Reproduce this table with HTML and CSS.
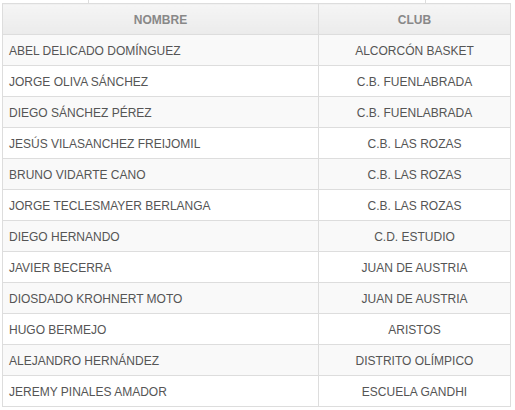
FILE: index.html
```html
<!DOCTYPE html>
<html lang="es">
<head>
<meta charset="utf-8">
<link rel="stylesheet" href="styles.css">
</head>
<body>
<div class="page">
  <div class="tab-stub"></div>
  <table class="roster">
    <thead>
      <tr><th class="col-name">NOMBRE</th><th class="col-club">CLUB</th></tr>
    </thead>
    <tbody>
      <tr><td>ABEL DELICADO DOMÍNGUEZ</td><td class="club">ALCORCÓN BASKET</td></tr>
      <tr><td>JORGE OLIVA SÁNCHEZ</td><td class="club">C.B. FUENLABRADA</td></tr>
      <tr><td>DIEGO SÁNCHEZ PÉREZ</td><td class="club">C.B. FUENLABRADA</td></tr>
      <tr><td>JESÚS VILASANCHEZ FREIJOMIL</td><td class="club">C.B. LAS ROZAS</td></tr>
      <tr><td>BRUNO VIDARTE CANO</td><td class="club">C.B. LAS ROZAS</td></tr>
      <tr><td>JORGE TECLESMAYER BERLANGA</td><td class="club">C.B. LAS ROZAS</td></tr>
      <tr><td>DIEGO HERNANDO</td><td class="club">C.D. ESTUDIO</td></tr>
      <tr><td>JAVIER BECERRA</td><td class="club">JUAN DE AUSTRIA</td></tr>
      <tr><td>DIOSDADO KROHNERT MOTO</td><td class="club">JUAN DE AUSTRIA</td></tr>
      <tr><td>HUGO BERMEJO</td><td class="club">ARISTOS</td></tr>
      <tr><td>ALEJANDRO HERNÁNDEZ</td><td class="club">DISTRITO OLÍMPICO</td></tr>
      <tr><td>JEREMY PINALES AMADOR</td><td class="club">ESCUELA GANDHI</td></tr>
    </tbody>
  </table>
</div>
</body>
</html>
```

FILE: styles.css
```css
html, body {
  margin: 0;
  padding: 0;
  background: #fff;
}
.page {
  padding: 0 4px 0 2px;
  font-family: "Liberation Sans", Arial, sans-serif;
  font-size: 12px;
  color: #555;
}
.tab-stub {
  margin-left: 86px;
  width: 336px;
  height: 3px;
  border-left: 1px solid #ddd;
  border-right: 1px solid #ddd;
}
.roster {
  width: 509px;
  border-collapse: collapse;
  border: 1px solid #ddd;
}
.roster th {
  box-sizing: border-box;
  height: 31px;
  padding: 2px 0 0;
  font-weight: bold;
  color: #888;
  text-align: center;
  background: linear-gradient(#f5f5f5, #ebebeb);
  border: 1px solid #ddd;
}
.col-name {
  width: 316px;
}
.roster td {
  box-sizing: border-box;
  height: 31px;
  padding: 2px 0 0 6px;
  border: 1px solid #ddd;
  vertical-align: middle;
}
.roster td.club {
  text-align: center;
  padding: 2px 0 0;
}
.roster tbody tr:nth-child(odd) td {
  background: #f9f9f9;
}
.roster tbody tr:nth-child(even) td {
  background: #fff;
}
```
